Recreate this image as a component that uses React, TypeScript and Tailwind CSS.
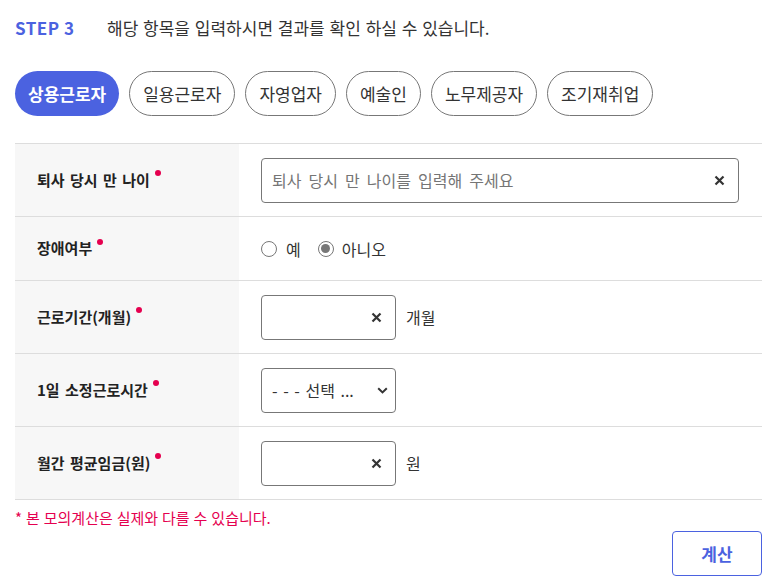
import React from "react";

const Dot = () => (
  <span className="ml-[5px] inline-block h-[6px] w-[6px] -translate-y-[7px] rounded-full bg-[#e5004f]" />
);

const XIcon = () => (
  <svg width="11" height="11" viewBox="0 0 11 11" className="shrink-0">
    <path d="M1.5 1.5 L9.5 9.5 M9.5 1.5 L1.5 9.5" stroke="#333" strokeWidth="2.2" strokeLinecap="butt" />
  </svg>
);

const Label = ({ children }: { children: React.ReactNode }) => (
  <div className="flex items-center bg-[#f7f7f7] pl-[22px] text-[15px] font-bold text-[#222] [word-spacing:2px]">
    <span>{children}</span>
    <Dot />
  </div>
);

const SmallInput = () => (
  <div className="flex h-[45px] w-[135px] items-center justify-end rounded-[4px] border border-[#777] pr-[13px]">
    <XIcon />
  </div>
);

export default function App() {
  const tabs = ["상용근로자", "일용근로자", "자영업자", "예술인", "노무제공자", "조기재취업"];
  return (
    <div
      className="h-[581px] w-[772px] bg-white pl-[15px] pr-[10px] pt-[16px] text-[#333]"
      style={{ fontFamily: '"Noto Sans CJK KR", "Noto Sans", sans-serif' }}
    >
      <div className="flex h-6 items-center leading-6">
        <span className="w-[92px] text-[17px] font-bold tracking-[0.5px] text-[#4b62e0]">STEP 3</span>
        <span className="text-[17px] text-[#333] [word-spacing:1px]">
          해당 항목을 입력하시면 결과를 확인 하실 수 있습니다.
        </span>
      </div>

      <div className="mt-[31px] flex gap-[10px]">
        {tabs.map((t, i) =>
          i === 0 ? (
            <div
              key={t}
              className="flex h-[45px] items-center rounded-full bg-[#4b62e0] px-[13px] text-[17px] font-bold text-white"
            >
              {t}
            </div>
          ) : (
            <div
              key={t}
              className="flex h-[45px] items-center rounded-full border border-[#777] px-[13px] text-[17px] text-[#333]"
            >
              {t}
            </div>
          )
        )}
      </div>

      <div className="mt-[27px] border-t border-[#ddd]">
        <div className="grid h-[73px] grid-cols-[224px_1fr] border-b border-[#ddd]">
          <Label>퇴사 당시 만 나이</Label>
          <div className="flex items-center pl-[22px] pr-[23px]">
            <div className="flex h-[45px] flex-1 items-center justify-between rounded-[4px] border border-[#777] pl-[10px] pr-[13px]">
              <span className="text-[16px] text-[#757575] [word-spacing:3.5px]">퇴사 당시 만 나이를 입력해 주세요</span>
              <XIcon />
            </div>
          </div>
        </div>

        <div className="grid h-[64px] grid-cols-[224px_1fr] border-b border-[#ddd]">
          <Label>장애여부</Label>
          <div className="flex items-center pl-[22px] text-[16px] text-[#333]">
            <span className="h-[16px] w-[16px] rounded-full border border-[#777] bg-white" />
            <span className="ml-[9px]">예</span>
            <span className="ml-[17px] flex h-[16px] w-[16px] items-center justify-center rounded-full border-[1.5px] border-[#777] bg-white">
              <span className="h-[9px] w-[9px] rounded-full bg-[#777]" />
            </span>
            <span className="ml-[8px]">아니오</span>
          </div>
        </div>

        <div className="grid h-[73px] grid-cols-[224px_1fr] border-b border-[#ddd]">
          <Label>근로기간(개월)</Label>
          <div className="flex items-center pl-[22px] text-[16px] text-[#333]">
            <SmallInput />
            <span className="ml-[10px]">개월</span>
          </div>
        </div>

        <div className="grid h-[73px] grid-cols-[224px_1fr] border-b border-[#ddd]">
          <Label>1일 소정근로시간</Label>
          <div className="flex items-center pl-[22px]">
            <div className="flex h-[45px] w-[135px] items-center justify-between rounded-[4px] border border-[#777] pl-[10px] pr-[7px] text-[16px] text-[#333]">
              <span className="[word-spacing:2px]">- - - 선택 ...</span>
              <svg width="11" height="7" viewBox="0 0 11 7">
                <path d="M1.2 1.2 L5.5 5.4 L9.8 1.2" stroke="#333" strokeWidth="2" fill="none" />
              </svg>
            </div>
          </div>
        </div>

        <div className="grid h-[73px] grid-cols-[224px_1fr] border-b border-[#ddd]">
          <Label>월간 평균임금(원)</Label>
          <div className="flex items-center pl-[22px] text-[16px] text-[#333]">
            <SmallInput />
            <span className="ml-[10px]">원</span>
          </div>
        </div>
      </div>

      <div className="mt-[8px] text-[15px] leading-5 text-[#e5004f] [word-spacing:0.6px]">
        * 본 모의계산은 실제와 다를 수 있습니다.
      </div>

      <div className="mt-[3px] flex justify-end">
        <button className="flex h-[45px] w-[90px] items-center justify-center rounded-[4px] border border-[#4b62e0] text-[17px] font-bold text-[#4b62e0]">
          계산
        </button>
      </div>
    </div>
  );
}
